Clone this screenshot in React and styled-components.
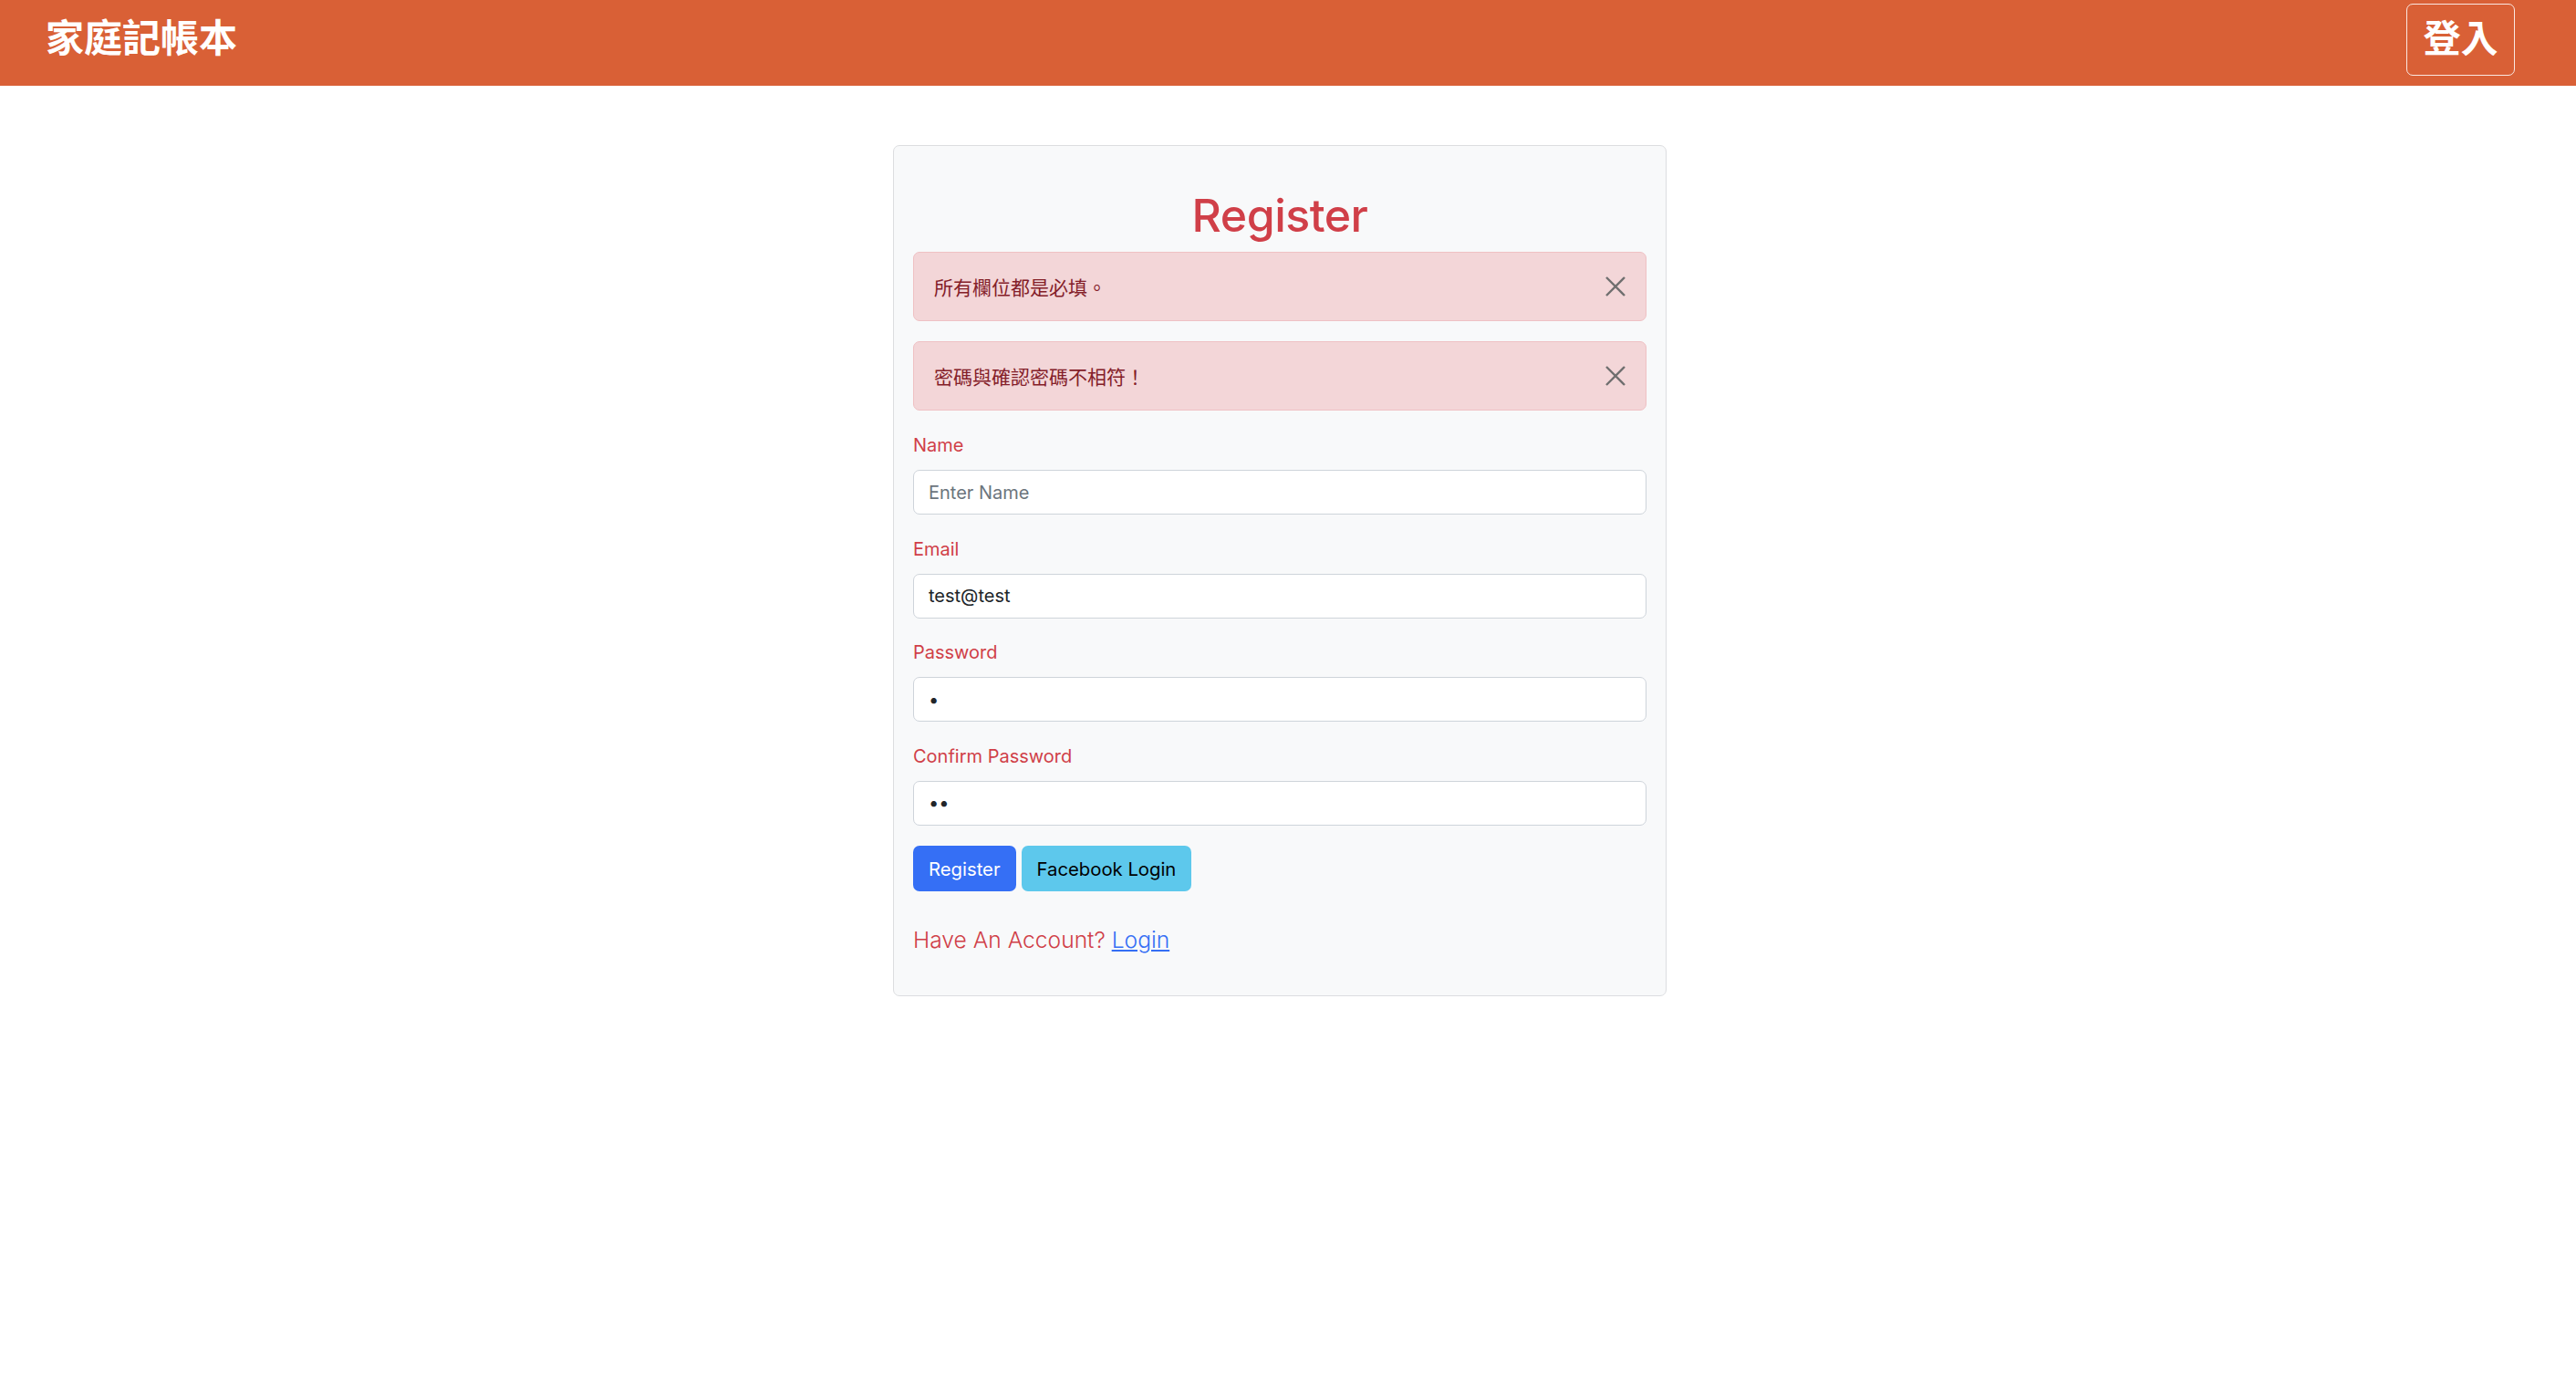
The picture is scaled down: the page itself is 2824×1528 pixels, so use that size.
import React from 'react';
import styled, { createGlobalStyle } from 'styled-components';

const GlobalStyle = createGlobalStyle`
  body {
    margin: 0;
    background: #ffffff;
    font-family: Inter, "Noto Sans CJK TC", sans-serif;
  }
  * { box-sizing: border-box; }
`;

const cjk = `"Noto Sans CJK TC", "Noto Sans CJK SC", sans-serif`;

const Navbar = styled.header`
  height: 94px;
  background: #d96036;
  display: flex;
  align-items: center;
  justify-content: space-between;
  padding: 0 67px 7px 50px;
`;

const Brand = styled.div`
  font-family: ${cjk};
  font-size: 42px;
  font-weight: 700;
  color: #ffffff;
  line-height: 1;
  margin-bottom: 10px;
`;

const NavButton = styled.button`
  width: 119px;
  height: 79px;
  border: 1.5px solid rgba(255, 255, 255, 0.85);
  border-radius: 7px;
  background: transparent;
  color: #ffffff;
  font-family: ${cjk};
  font-size: 41px;
  font-weight: 700;
  line-height: 1;
  padding: 0 0 8px;
`;

const Main = styled.main`
  display: flex;
  justify-content: center;
  padding: 65px 18px 0 0;
`;

const Card = styled.div`
  width: 848px;
  background: #f8f9fa;
  border: 1px solid #dcdde0;
  border-radius: 7px;
  padding: 46px 21px 42px;
`;

const Title = styled.h2`
  margin: 0 0 10px;
  text-align: center;
  font-size: 50px;
  line-height: 60px;
  font-weight: 500;
  color: #d03f48;
  letter-spacing: -0.5px;
`;

const Alert = styled.div`
  height: 76px;
  display: flex;
  align-items: center;
  justify-content: space-between;
  background: #f3d6d8;
  border: 1px solid #efc1c4;
  border-radius: 7px;
  padding: 0 22px 0 22px;
  margin-bottom: 22px;
  font-family: ${cjk};
  font-size: 21px;
  color: #842029;
`;

const Close = styled.button`
  width: 22px;
  height: 22px;
  padding: 0;
  border: none;
  background: none;
  display: flex;
`;

const Form = styled.form`
  padding-top: 1px;
`;

const Field = styled.div`
  margin-bottom: 22.5px;
`;

const Label = styled.label`
  display: block;
  font-size: 20px;
  line-height: 31px;
  color: #d03f48;
  margin-bottom: 11px;
`;

const Input = styled.input`
  display: block;
  width: 100%;
  height: 49px;
  border: 1px solid #ced4da;
  border-radius: 7px;
  background: #ffffff;
  padding: 0 16px;
  font-family: Inter, sans-serif;
  font-size: 20px;
  color: #212529;
  outline: none;
  &::placeholder { color: #6c757d; }
`;

const Actions = styled.div`
  display: flex;
  gap: 6px;
`;

const Button = styled.button`
  height: 50px;
  padding: 0 17px;
  border: none;
  border-radius: 7px;
  font-family: Inter, sans-serif;
  font-size: 20.3px;
  background: ${p => (p.$variant === 'info' ? '#5dc8ec' : '#356ff5')};
  color: ${p => (p.$variant === 'info' ? '#000000' : '#ffffff')};
`;

const Footer = styled.p`
  margin: 34px 0 0;
  font-size: 24.6px;
  line-height: 38px;
  font-weight: 300;
  color: #d03f48;
  a { color: #356ff5; text-decoration: underline; }
`;

function CloseIcon() {
  return (
    <svg width="22" height="22" viewBox="0 0 22 22">
      <path d="M1 1 L21 21 M21 1 L1 21" stroke="#6f6f6f" strokeWidth="2.4" />
    </svg>
  );
}

export default function App() {
  const alerts = ['所有欄位都是必填。', '密碼與確認密碼不相符！'];
  return (
    <>
      <GlobalStyle />
      <Navbar>
        <Brand>家庭記帳本</Brand>
        <NavButton>登入</NavButton>
      </Navbar>
      <Main>
        <Card>
          <Title>Register</Title>
          {alerts.map(msg => (
            <Alert key={msg}>
              <span>{msg}</span>
              <Close type="button" aria-label="Close"><CloseIcon /></Close>
            </Alert>
          ))}
          <Form onSubmit={e => e.preventDefault()}>
            <Field>
              <Label>Name</Label>
              <Input type="text" placeholder="Enter Name" />
            </Field>
            <Field>
              <Label>Email</Label>
              <Input type="email" defaultValue="test@test" />
            </Field>
            <Field>
              <Label>Password</Label>
              <Input type="password" defaultValue="a" />
            </Field>
            <Field>
              <Label>Confirm Password</Label>
              <Input type="password" defaultValue="ab" />
            </Field>
            <Actions>
              <Button type="submit">Register</Button>
              <Button type="button" $variant="info">Facebook Login</Button>
            </Actions>
          </Form>
          <Footer>
            Have An Account? <a href="#login">Login</a>
          </Footer>
        </Card>
      </Main>
    </>
  );
}
